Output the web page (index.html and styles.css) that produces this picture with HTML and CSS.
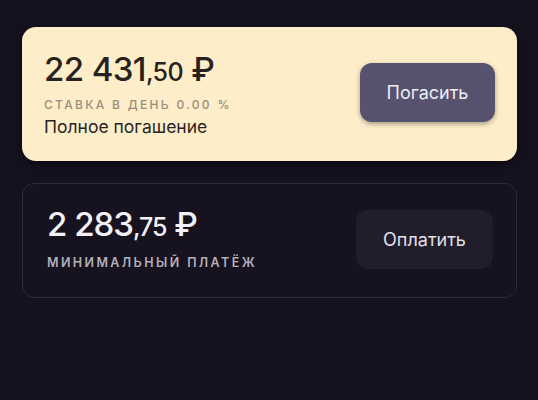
FILE: index.html
```html
<!DOCTYPE html>
<html lang="ru">
<head>
  <meta charset="UTF-8">
  <title>Погашение</title>
  <link rel="stylesheet" href="styles.css">
</head>
<body>

  <div class="payments">

    <div class="card card-full">
      <div class="info">
        <div class="amount">22 431<span class="cents">,50</span> ₽</div>
        <div class="caption">Ставка в день 0.00 %</div>
        <div class="note">Полное погашение</div>
      </div>
      <button class="btn btn-repay">Погасить</button>
    </div>

    <div class="card card-min">
      <div class="info">
        <div class="amount">2 283<span class="cents">,75</span> ₽</div>
        <div class="caption">Минимальный платёж</div>
      </div>
      <button class="btn btn-pay">Оплатить</button>
    </div>

  </div>

</body>
</html>
```

FILE: styles.css
```css
body {
  margin: 0;
  background: #15121f;
  font-family: Inter, "Noto Sans", sans-serif;
}

.payments {
  padding: 27px 21px 0 22px;
  display: flex;
  flex-direction: column;
  gap: 22px;
}

.card {
  display: flex;
  align-items: center;
  justify-content: space-between;
  border-radius: 14px;
}

.card-full {
  height: 134px;
  box-sizing: border-box;
  padding: 0 22px 0 22px;
  background: #fdedc9;
  box-shadow: 0 3px 10px rgba(0, 0, 0, 0.55);
}

.card-min {
  height: 115px;
  box-sizing: border-box;
  padding: 0 23px 0 24px;
  background: #16121f;
  border: 1px solid #2d2a3a;
  border-radius: 12px;
}

.amount {
  font-size: 33px;
  font-weight: 500;
  letter-spacing: -0.6px;
  line-height: 36px;
}

.cents {
  font-size: 25px;
}

.caption {
  font-size: 12px;
  font-weight: 500;
  text-transform: uppercase;
  letter-spacing: 2.3px;
  line-height: 14px;
  margin-top: 8px;
}

.card-full .amount {
  color: #27221e;
}

.card-full .caption {
  color: #988e7e;
}

.note {
  font-size: 17.5px;
  color: #29241f;
  margin-top: 4px;
}

.card-min .info {
  margin-top: -6px;
}

.card-min .amount {
  color: #f3f1f6;
  letter-spacing: -1px;
}

.card-min .caption {
  color: #b2afbb;
  font-weight: 600;
  font-size: 12.5px;
  letter-spacing: 2.4px;
  margin-top: 11px;
}

.btn {
  border: none;
  border-radius: 12px;
  font-family: inherit;
  font-size: 18px;
  cursor: pointer;
}

.btn-repay {
  width: 135px;
  height: 59px;
  margin-top: -4px;
  background: #57536f;
  color: #eeedf3;
  box-shadow: 0 2px 5px rgba(0, 0, 0, 0.35);
}

.btn-pay {
  width: 137px;
  height: 59px;
  margin-top: -2px;
  background: #211d2b;
  color: #e2e0e8;
}
```
